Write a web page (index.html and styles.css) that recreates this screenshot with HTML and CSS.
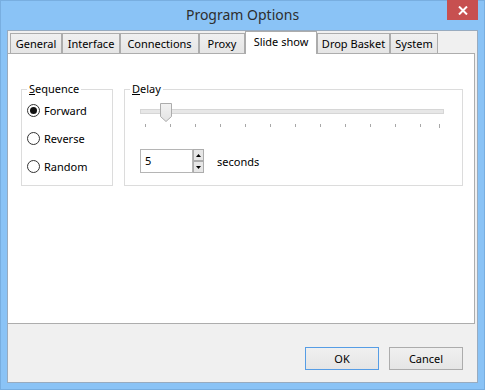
FILE: index.html
```html
<!DOCTYPE html>
<html lang="en">
<head>
  <meta charset="utf-8" />
  <title>Program Options</title>
  <link rel="stylesheet" href="styles.css">
</head>
<body>
  <div class="window">
    <div class="titlebar">
      <div class="title">Program Options</div>
      <div class="close">
        <svg width="10" height="9" viewBox="0 0 10 9"><path d="M1 0.5 L9 8.5 M9 0.5 L1 8.5" stroke="#fff" stroke-width="2"/></svg>
      </div>
    </div>

    <div class="client">
      <div class="tabs">
        <div class="tab w-general">General</div>
        <div class="tab w-interface">Interface</div>
        <div class="tab w-connections">Connections</div>
        <div class="tab w-proxy">Proxy</div>
        <div class="tab active w-slide">Slide show</div>
        <div class="tab w-basket">Drop Basket</div>
        <div class="tab w-system">System</div>
      </div>

      <div class="panel">
        <fieldset class="group seq">
          <legend><u>S</u>equence</legend>
          <div class="radios">
            <label class="radio"><span class="dot on"></span>Forward</label>
            <label class="radio"><span class="dot"></span>Reverse</label>
            <label class="radio"><span class="dot"></span>Random</label>
          </div>
        </fieldset>

        <fieldset class="group delay">
          <legend><u>D</u>elay</legend>
          <svg class="slider" width="306" height="28" viewBox="0 0 306 28">
            <rect x="0.5" y="8.5" width="303" height="4" fill="#e7e7e7" stroke="#d6d6d6"/>
            <g stroke="#a8a8a8">
              <path d="M5.5 23 V26 M30.5 23 V26 M55.5 23 V26 M80.5 23 V26 M105.5 23 V26 M130.5 23 V26 M155.5 23 V26 M180.5 23 V26 M205.5 23 V26 M230.5 23 V26 M255.5 23 V26 M280.5 23 V26 M299.5 23 V27"/>
            </g>
            <defs>
              <linearGradient id="thumb" x1="0" y1="0" x2="0" y2="1">
                <stop offset="0" stop-color="#f2f2f2"/>
                <stop offset="1" stop-color="#e3e3e3"/>
              </linearGradient>
            </defs>
            <path d="M20.5 2.5 H31.5 V15.5 L26 20.5 L20.5 15.5 Z" fill="url(#thumb)" stroke="#acacac"/>
          </svg>
          <div class="spinrow">
            <div class="edit">5</div>
            <div class="arrows">
              <span class="arrow"><svg width="5" height="3" viewBox="0 0 5 3"><path d="M2.5 0 L5 3 H0 Z" fill="#000"/></svg></span>
              <span class="arrow"><svg width="5" height="3" viewBox="0 0 5 3"><path d="M0 0 H5 L2.5 3 Z" fill="#000"/></svg></span>
            </div>
            <span class="unit">seconds</span>
          </div>
        </fieldset>
      </div>

      <div class="buttons">
        <button class="btn default">OK</button>
        <button class="btn">Cancel</button>
      </div>
    </div>
  </div>
</body>
</html>
```

FILE: styles.css
```css
body {
  margin:0;
  font-family:'Noto Sans',sans-serif;
  font-size:11px;
  color:#000;
}
.window {
  width:485px;
  height:390px;
  box-sizing:border-box;
  background:#8ac3f6;
  padding:0 7px 7px 7px;
  display:flex;
  flex-direction:column;
  box-shadow:inset 0 0 0 1px #78aee0;
}
.titlebar {
  height:30px;
  display:grid;
  grid-template-columns:1fr auto 1fr;
  align-items:start;
}
.title {
  grid-column:2;
  font-size:14px;
  line-height:30px;
  color:#2e2e2e;
}
.close {
  grid-column:3;
  justify-self:end;
  width:31px;
  height:20px;
  background:#c75050;
  display:flex;
  align-items:center;
  justify-content:center;
}
.client {
  flex:1;
  background:#f0f0f0;
  border:1px solid #98abbf;
  display:flex;
  flex-direction:column;
}
.tabs {
  height:22px;
  display:flex;
  align-items:flex-end;
  padding-left:2px;
}
.tab {
  height:20px;
  box-sizing:border-box;
  border:1px solid #acacac;
  border-bottom:none;
  background:linear-gradient(180deg,#f0f0f0,#e5e5e5);
  text-align:center;
  line-height:19px;
  white-space:nowrap;
}
.tab.active {
  height:23px;
  margin-bottom:-1px;
  background:#fff;
  position:relative;
  z-index:1;
}
.w-general { width:52px; }
.w-interface { width:58px; }
.w-connections { width:79px; }
.w-proxy { width:46px; }
.w-slide { width:72px; }
.w-basket { width:73px; }
.w-system { width:48px; }
.panel {
  height:271px;
  box-sizing:border-box;
  background:#fff;
  border:1px solid #adadad;
  border-left:none;
  margin-right:2px;
  padding:27px 0 0 13px;
  display:flex;
  gap:11px;
  align-items:flex-start;
}
.group {
  margin:0;
  padding:0;
  border:1px solid #dcdcdc;
  height:105px;
  box-sizing:border-box;
  min-width:0;
}
.group legend {
  padding:0 2px;
  margin-left:5px;
  line-height:16px;
}
.seq {
  width:92px;
}
.radios {
  display:flex;
  flex-direction:column;
  gap:8px;
  padding:3px 0 0 5px;
}
.radio {
  height:20px;
  display:flex;
  align-items:center;
  gap:4px;
}
.dot {
  width:13px;
  height:13px;
  box-sizing:border-box;
  border:1px solid #333;
  border-radius:50%;
  background:#fff;
  display:flex;
  align-items:center;
  justify-content:center;
}
.dot.on::after {
  content:'';
  width:7px;
  height:7px;
  border-radius:50%;
  background:#111;
}
.delay {
  width:339px;
}
.slider {
  display:block;
  margin:4px 0 0 15px;
}
.spinrow {
  margin:20px 0 0 15px;
  height:24px;
  display:flex;
  align-items:center;
}
.edit {
  width:53px;
  height:24px;
  box-sizing:border-box;
  border:1px solid #b5b5b5;
  background:#fff;
  padding-left:4px;
  line-height:22px;
}
.arrows {
  width:11px;
  height:24px;
  display:flex;
  flex-direction:column;
}
.arrow {
  height:12px;
  box-sizing:border-box;
  border:1px solid #acacac;
  background:#e6e6e6;
  display:flex;
  align-items:center;
  justify-content:center;
}
.unit {
  margin-left:13px;
}
.buttons {
  margin-top:23px;
  display:flex;
  justify-content:flex-end;
  gap:10px;
  padding-right:14px;
}
.btn {
  width:74px;
  height:23px;
  border:1px solid #acacac;
  background:linear-gradient(180deg,#f0f0f0,#e5e5e5);
  font-family:inherit;
  font-size:11px;
  color:#000;
  padding:0;
}
.btn.default {
  border-color:#569de5;
}
```
